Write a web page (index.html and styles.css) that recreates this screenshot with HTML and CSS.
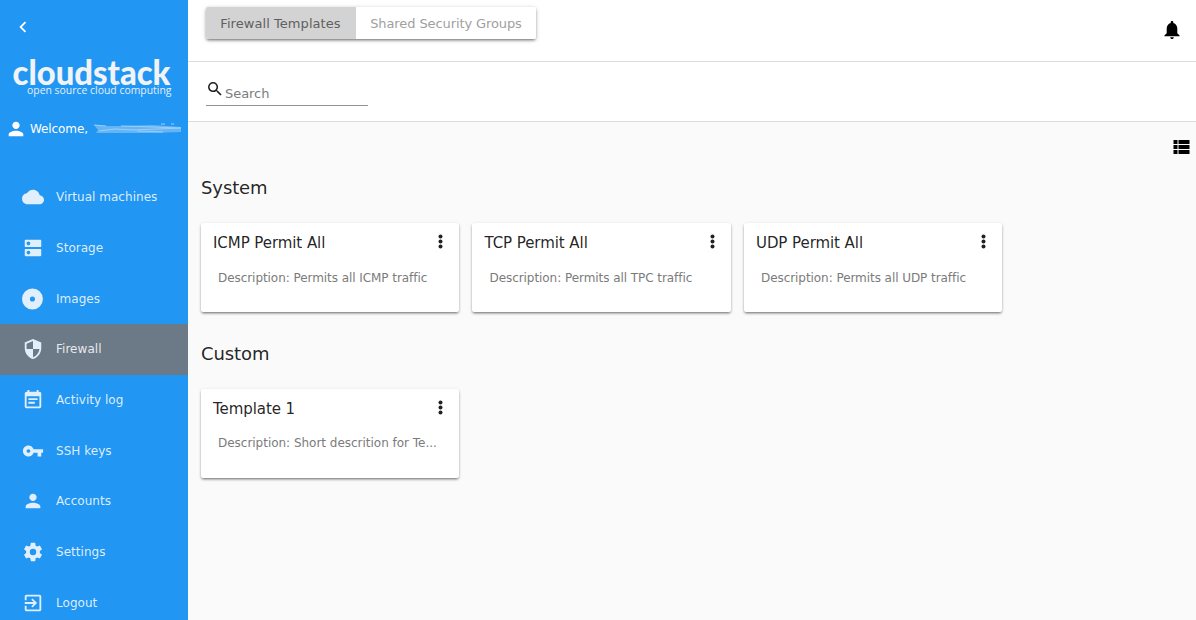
FILE: index.html
```html
<!DOCTYPE html>
<html lang="en">
<head>
<meta charset="utf-8">
<title>CloudStack - Firewall Templates</title>
<link rel="stylesheet" href="styles.css">
</head>
<body>
<div class="app">
  <aside class="sidebar">
    <svg class="back" viewBox="0 0 24 24"><path d="M15.4 7.4 14 6l-6 6 6 6 1.4-1.4L10.8 12z"/></svg>
    <svg class="logo" viewBox="0 0 188 60">
      <text class="logo-name" x="12.500" y="43" textLength="158" lengthAdjust="spacingAndGlyphs">cloudstack</text>
      <text class="logo-tag" x="27" y="52" textLength="144.500" lengthAdjust="spacingAndGlyphs">open source cloud computing</text>
    </svg>
    <div class="welcome">
      <svg class="icon" viewBox="0 0 24 24"><path d="M12 12c2.200 0 4-1.800 4-4s-1.800-4-4-4-4 1.800-4 4 1.800 4 4 4zm0 2c-2.700 0-8 1.300-8 4v2h16v-2c0-2.700-5.300-4-8-4z"/></svg>
      <span>Welcome,</span>
      <svg class="scribble" viewBox="0 0 90 12"><path class="smear" d="M1 2 8 3 26 3 60 2 88 4V9L60 10 3 10 5 7Z"/><path class="stroke" d="M1 2 13 3M6 8 22 6 40 7 88 5M28 3 60 4 88 5M44 8 70 9M68 1h4M78 1h3"/></svg>
    </div>
    <nav class="nav">
      <a class="item"><svg class="icon" viewBox="0 0 24 24"><path d="M19.350 10.040C18.670 6.590 15.640 4 12 4 9.110 4 6.600 5.640 5.350 8.040 2.340 8.360 0 10.910 0 14c0 3.310 2.690 6 6 6h13c2.760 0 5-2.240 5-5 0-2.640-2.050-4.780-4.650-4.960z"/></svg>Virtual machines</a>
      <a class="item"><svg class="icon" viewBox="0 0 24 24"><path d="M20 13H4c-.55 0-1 .45-1 1v6c0 .55.45 1 1 1h16c.55 0 1-.45 1-1v-6c0-.55-.45-1-1-1zM7 19c-1.100 0-2-.9-2-2s.9-2 2-2 2 .9 2 2-.9 2-2 2zM20 3H4c-.55 0-1 .45-1 1v6c0 .55.45 1 1 1h16c.55 0 1-.45 1-1V4c0-.55-.45-1-1-1zM7 9c-1.100 0-2-.9-2-2s.9-2 2-2 2 .9 2 2-.9 2-2 2z"/></svg>Storage</a>
      <a class="item"><svg class="icon" viewBox="0 0 24 24"><path fill-rule="evenodd" d="M11.400 .6a11.400 11.400 0 1 0 0 22.800 11.400 11.400 0 0 0 0-22.800zm0 8.600a2.800 2.800 0 1 1 0 5.600 2.800 2.800 0 0 1 0-5.600z"/></svg>Images</a>
      <a class="item active"><svg class="icon" viewBox="0 0 24 24"><path d="M12 1L3 5v6c0 5.550 3.840 10.740 9 12 5.160-1.260 9-6.450 9-12V5l-9-4zm0 10.990h7c-.53 4.120-3.280 7.790-7 8.940V12H5V6.300l7-3.110v8.800z"/></svg>Firewall</a>
      <a class="item"><svg class="icon" viewBox="0 0 24 24"><path d="M17 10H7v2h10v-2zm2-7h-1V1h-2v2H8V1H6v2H5c-1.110 0-1.990.9-1.990 2L3 19c0 1.100.89 2 2 2h14c1.100 0 2-.9 2-2V5c0-1.100-.9-2-2-2zm0 16H5V8h14v11zm-5-5H7v2h7v-2z"/></svg>Activity log</a>
      <a class="item"><svg class="icon" viewBox="0 0 24 24"><path d="M12.650 10C11.830 7.670 9.610 6 7 6c-3.310 0-6 2.690-6 6s2.690 6 6 6c2.610 0 4.830-1.670 5.650-4H17v4h4v-4h2v-4H12.650zM7 14c-1.100 0-2-.9-2-2s.9-2 2-2 2 .9 2 2-.9 2-2 2z"/></svg>SSH keys</a>
      <a class="item"><svg class="icon" viewBox="0 0 24 24"><path d="M12 12c2.200 0 4-1.800 4-4s-1.800-4-4-4-4 1.800-4 4 1.800 4 4 4zm0 2c-2.700 0-8 1.300-8 4v2h16v-2c0-2.700-5.300-4-8-4z"/></svg>Accounts</a>
      <a class="item"><svg class="icon" viewBox="0 0 24 24"><path d="M12 15.500A3.500 3.500 0 0 1 8.500 12 3.500 3.500 0 0 1 12 8.500a3.500 3.500 0 0 1 3.500 3.500 3.500 3.500 0 0 1-3.500 3.500m7.430-2.530c.04-.32.07-.64.07-.97s-.03-.66-.07-1l2.110-1.630c.19-.15.24-.42.12-.64l-2-3.460c-.12-.22-.39-.31-.61-.22l-2.490 1c-.52-.39-1.060-.73-1.690-.98l-.37-2.650A.506.506 0 0 0 14 2h-4c-.25 0-.46.18-.5.42l-.37 2.650c-.63.25-1.170.59-1.690.98l-2.490-1c-.22-.09-.49 0-.61.22l-2 3.460c-.13.22-.07.49.12.64L4.570 11c-.04.34-.07.67-.07 1s.03.65.07.97l-2.110 1.660c-.19.15-.25.42-.12.64l2 3.460c.12.22.39.3.61.22l2.490-1.010c.52.4 1.060.74 1.690.99l.37 2.650c.04.24.25.42.5.42h4c.25 0 .46-.18.5-.42l.37-2.650c.63-.26 1.170-.59 1.690-.99l2.490 1.010c.22.08.49 0 .61-.22l2-3.460c.12-.22.07-.49-.12-.64z"/></svg>Settings</a>
      <a class="item"><svg class="icon" viewBox="0 0 24 24"><path d="M10.090 15.590L11.500 17l5-5-5-5-1.410 1.410L12.670 11H3v2h9.670l-2.580 2.590zM19 3H5c-1.110 0-2 .9-2 2v4h2V5h14v14H5v-4H3v4c0 1.100.89 2 2 2h14c1.100 0 2-.9 2-2V5c0-1.100-.9-2-2-2z"/></svg>Logout</a>
    </nav>
  </aside>
  <main class="main">
    <header class="topbar">
      <div class="tabs"><button class="tab selected">Firewall Templates</button><button class="tab">Shared Security Groups</button></div>
      <svg class="bell" viewBox="0 0 16 18"><path d="M8 0c.8 0 1.300.5 1.300 1.300v.6C12 2.600 13.300 5 13.300 7.500v4.700L15.600 14.500v.8H.4v-.8l2.300-2.300V7.500C2.700 5 4 2.600 6.700 1.900v-.6C6.700.5 7.200 0 8 0zM6.200 16.200h3.600c0 1-.8 1.800-1.800 1.800s-1.800-.8-1.800-1.800z"/></svg>
    </header>
    <div class="filter">
      <div class="search">
        <svg class="search-icon" viewBox="3 3 18 18"><path d="M15.500 14h-.79l-.28-.27A6.471 6.471 0 0 0 16 9.500 6.500 6.500 0 1 0 9.500 16c1.610 0 3.090-.59 4.230-1.570l.27.28v.79l5 4.990L20.490 19l-4.990-5zm-6 0C7.010 14 5 11.990 5 9.500S7.010 5 9.500 5 14 7.010 14 9.500 11.990 14 9.500 14z"/></svg>
        <span class="placeholder">Search</span>
      </div>
    </div>
    <div class="content">
      <div class="view"><svg class="list-icon" viewBox="0 0 16 14"><path d="M0 0h4v4H0zM5 0h11v4H5zM0 5h4v4H0zM5 5h11v4H5zM0 10h4v4H0zM5 10h11v4H5z"/></svg></div>
      <h2 class="heading">System</h2>
      <div class="cards">
        <article class="card"><div class="card-head"><h3 class="title">ICMP Permit All</h3><svg class="dots" viewBox="0 0 5 15"><circle cx="2.500" cy="2.500" r="2"/><circle cx="2.500" cy="7.500" r="2"/><circle cx="2.500" cy="12.500" r="2"/></svg></div><p class="desc">Description: Permits all ICMP traffic</p></article>
        <article class="card"><div class="card-head"><h3 class="title">TCP Permit All</h3><svg class="dots" viewBox="0 0 5 15"><circle cx="2.500" cy="2.500" r="2"/><circle cx="2.500" cy="7.500" r="2"/><circle cx="2.500" cy="12.500" r="2"/></svg></div><p class="desc">Description: Permits all TPC traffic</p></article>
        <article class="card"><div class="card-head"><h3 class="title">UDP Permit All</h3><svg class="dots" viewBox="0 0 5 15"><circle cx="2.500" cy="2.500" r="2"/><circle cx="2.500" cy="7.500" r="2"/><circle cx="2.500" cy="12.500" r="2"/></svg></div><p class="desc">Description: Permits all UDP traffic</p></article>
      </div>
      <h2 class="heading">Custom</h2>
      <div class="cards">
        <article class="card custom"><div class="card-head"><h3 class="title">Template 1</h3><svg class="dots" viewBox="0 0 5 15"><circle cx="2.500" cy="2.500" r="2"/><circle cx="2.500" cy="7.500" r="2"/><circle cx="2.500" cy="12.500" r="2"/></svg></div><p class="desc">Description: Short descrition for Te...</p></article>
      </div>
    </div>
  </main>
</div>
</body>
</html>
```
FILE: styles.css
```css
* { box-sizing: border-box; }
body { margin: 0; font-family: "DejaVu Sans", sans-serif; overflow: hidden; }
svg { display: block; flex: none; }
.app { display: flex; width: 1196px; height: 620px; overflow: hidden; }

.sidebar { width: 188px; flex: none; background: #2196f3; color: #fff; overflow: hidden; }
.sidebar svg { fill: #fff; }
.back { width: 22px; height: 22px; margin: 15.500px 0 0 12px; }
.logo { width: 188px; height: 60px; margin-top: 4.500px; }
.sidebar .logo-name { font: 900 34px Lato, sans-serif; fill: #f1f3f5; }
.sidebar .logo-tag { font: 11px "Open Sans", sans-serif; fill: #e3effb; }
.welcome { display: flex; align-items: center; height: 26px; margin-top: 14px; padding-left: 5px; font-size: 12px; }
.welcome span { margin-left: 3px; letter-spacing: -.1px; }
.welcome .scribble { width: 90px; height: 12px; margin-left: 5px; }
.welcome .smear { fill: #64b4f6; }
.welcome .stroke { fill: none; stroke: #9dcff9; stroke-width: 1; }
.icon { width: 22px; height: 22px; }
.nav { margin-top: 29.860px; }
.item { display: flex; align-items: center; gap: 12px; height: 50.6875px; padding-left: 22px; font-size: 12px; letter-spacing: .03px; color: rgba(255, 255, 255, .85); }
.item .icon { fill: #e1effd; }
.active { background: #6c7a87; }

.main { flex: 1; min-width: 0; background: #fafafa; color: rgba(0, 0, 0, .87); }
.topbar { display: flex; justify-content: space-between; height: 62px; padding: 7px 16px 0 18px; background: #fff; border-bottom: 1px solid #dcdcdc; }
.tabs { display: flex; height: 32px; border-radius: 2px; box-shadow: 0 2px 3px -1px rgba(0, 0, 0, .45), 0 1px 4px rgba(0, 0, 0, .25); }
.tab { width: 180px; border: 0; padding: 0; background: #fff; color: #a0a0a0; font: 13px "DejaVu Sans", sans-serif; letter-spacing: -.1px; border-radius: 0 2px 2px 0; white-space: nowrap; }
.selected { width: 150px; padding-right: 1px; background: #d3d3d3; color: #606060; letter-spacing: .06px; border-radius: 2px 0 0 2px; }
.bell { width: 16px; height: 18px; margin-top: 14px; }
.filter { height: 60px; padding: 16px 18px 0; background: #fff; border-bottom: 1px solid #dcdcdc; }
.search { display: flex; width: 162px; height: 28px; padding: 3px 0 0 2px; border-bottom: 1px solid #949494; }
.search-icon { width: 14px; height: 14px; margin-top: .5px; fill: #212121; }
.placeholder { margin: 5px 0 0 3px; font-size: 13px; line-height: 16px; letter-spacing: -.05px; color: #7c7c7c; }

.content { padding: 18px 6px 0 13px; }
.view { display: flex; justify-content: flex-end; height: 32px; }
.list-icon { width: 17px; height: 14px; }
.heading { margin: 0; height: 51px; padding-top: 5px; font-size: 18px; line-height: 22px; font-weight: 400; letter-spacing: -.1px; }
.cards { display: flex; gap: 13.200px; height: 115px; }
.card { width: 258.300px; height: 89px; padding: 10px 16px 0 12px; background: #fff; border-radius: 2px; box-shadow: 0 2px 3px -1px rgba(0, 0, 0, .45), 0 1px 3px rgba(0, 0, 0, .22); }
.card-head { display: flex; justify-content: space-between; height: 35px; }
.custom .card-head { height: 34px; }
.title { margin: 1px 0 0; font-size: 15px; line-height: 19px; font-weight: 400; letter-spacing: -.07px; }
.dots { width: 5px; height: 15px; margin-top: 1px; fill: #212121; }
.desc { margin: 0 0 0 5px; font-size: 12px; line-height: 20px; letter-spacing: -.06px; color: #7b7b7b; white-space: nowrap; }
.custom .desc { letter-spacing: -.02px; }
```
